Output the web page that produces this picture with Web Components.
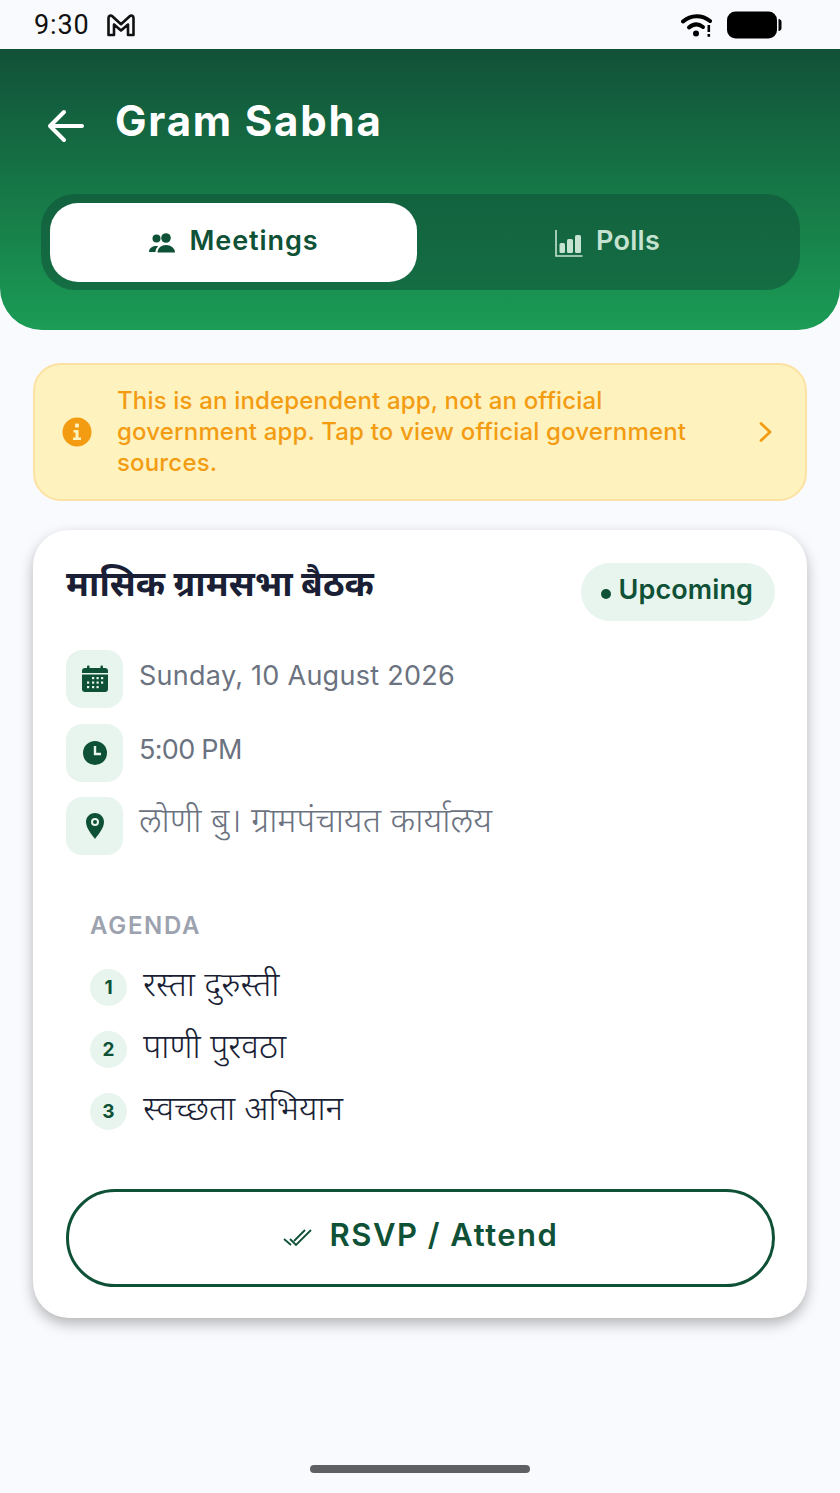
<!DOCTYPE html>
<html lang="mr">
<head>
<meta charset="utf-8">
<title>Gram Sabha</title>
<style>
    html, body { margin: 0; padding: 0; background: #f9fafd; }
    body { width: 840px; height: 1493px; overflow: hidden; font-family: "Inter", "Noto Sans", sans-serif; }
    gs-app { height: 1493px; }
</style>
</head>
<body>
<gs-app>
    <gs-status slot="status"></gs-status>
    <gs-header slot="header" title="Gram Sabha"></gs-header>
    <gs-banner slot="banner">This is an independent app, not an official<br>government app. Tap to view official government<br>sources.</gs-banner>
    <gs-card slot="card"></gs-card>
</gs-app>

<script>
const FONT = '"Inter", "Noto Sans", "Noto Sans Devanagari", sans-serif';
const DARK = '#0f5136';

class GsApp extends HTMLElement {
    constructor() {
        super();
        this.attachShadow({ mode: 'open' });
        this.shadowRoot.innerHTML = `
        <style>
            :host { display: flex; flex-direction: column; position: relative; font-family: ${FONT}; }
            .body { display: flex; flex-direction: column; padding: 33px 33px 0; gap: 29px; }
            .home { width: 220px; height: 8px; border-radius: 4px; background: #5f6063; margin: auto auto 20px; }
        </style>
        <slot name="status"></slot>
        <slot name="header"></slot>
        <div class="body">
            <slot name="banner"></slot>
            <slot name="card"></slot>
        </div>
        <div class="home"></div>`;
    }
}
customElements.define('gs-app', GsApp);

class GsStatus extends HTMLElement {
    constructor() {
        super();
        this.attachShadow({ mode: 'open' });
        this.shadowRoot.innerHTML = `
        <style>
            :host { display: flex; align-items: center; height: 49px; padding: 0 58px 0 34px; box-sizing: border-box; }
            .time { font: 400 27px "Roboto", sans-serif; color: #111; margin-right: 17px; letter-spacing: .9px; }
            .right { margin-left: auto; display: flex; align-items: center; gap: 14px; }
            svg { display: block; }
        </style>
        <span class="time">9:30</span>
        <svg width="28" height="24" viewBox="0 0 28 24"><path d="M1.500 22V5C1.500 2.800 3.800 1.800 5.300 3.200L14 11.200 22.700 3.200C24.200 1.800 26.500 2.800 26.500 5V22H21V11.500L14 17.500 7 11.500V22Z" fill="none" stroke="#111" stroke-width="2.600" stroke-linejoin="round"/></svg>
        <div class="right">
            <svg width="32" height="24" viewBox="0 0 32 24">
                <path d="M2 8.500C10 1.500 21 1.500 29 8" fill="none" stroke="#000" stroke-width="4" stroke-linecap="round"/>
                <path d="M8 14.500C12.500 10.500 17.500 10.500 22 14" fill="none" stroke="#000" stroke-width="4" stroke-linecap="round"/>
                <circle cx="15" cy="20.500" r="3" fill="#000"/>
                <rect x="26.500" y="12" width="2.600" height="7" fill="#000"/><rect x="26.500" y="21" width="2.600" height="2.800" fill="#000"/>
            </svg>
            <svg width="55" height="28" viewBox="0 0 55 28">
                <rect x="0" y="0.500" width="50" height="27" rx="8.500" fill="#000"/>
                <path d="M51.500 8c2 .300 3 1.200 3 3v6c0 1.800-1 2.700-3 3Z" fill="#000"/>
            </svg>
        </div>`;
    }
}
customElements.define('gs-status', GsStatus);

class GsHeader extends HTMLElement {
    constructor() {
        super();
        this.attachShadow({ mode: 'open' });
        this.shadowRoot.innerHTML = `
        <style>
            :host { display: block; height: 281px; box-sizing: border-box; padding: 0 40px 0 41px; border-radius: 0 0 42px 42px;
                background: linear-gradient(180deg, #115138 0%, #1b9c55 100%); color: #fff; }
            .top { display: flex; align-items: center; height: 145px; }
            .top svg { margin: 8px 30px 0 6px; display: block; }
            h1 { margin: 0; font: 700 42px ${FONT}; letter-spacing: 1.800px; position: relative; top: -1px; }
            .tabs { display: flex; gap: 7px; padding: 9px 9px 8px; height: 96px; box-sizing: border-box; border-radius: 34px; background: rgba(17, 81, 56, .55); }
        </style>
        <div class="top">
            <svg width="38" height="36" viewBox="0 0 38 36"><path d="M35 18H4M17 4 3 18l14 14" fill="none" stroke="#fff" stroke-width="4" stroke-linecap="round" stroke-linejoin="round"/></svg>
            <h1></h1>
        </div>
        <div class="tabs">
            <gs-tab active>
                <svg slot="icon" width="28" height="20" viewBox="0 0 28 20"><circle cx="7.500" cy="5.500" r="4" fill="${DARK}"/><circle cx="17" cy="5" r="4.800" fill="${DARK}"/><path d="M0 19c0-3.500 3-6 7-6 .8 0 1.500.1 2.200.3C7.500 14.800 6.500 16.800 6.500 19H0Z" fill="${DARK}"/><path d="M8.500 19.500c0-4.500 4-7.500 8.500-7.500s9 3 9 7.500Z" fill="${DARK}"/></svg>
                Meetings
            </gs-tab>
            <gs-tab>
                <svg slot="icon" width="28" height="28" viewBox="0 0 28 28" fill="#c6e2d0"><path d="M1 1v26h26.500" fill="none" stroke="#c6e2d0" stroke-width="1.600"/><rect x="4.500" y="14" width="5.500" height="10" rx="1.500"/><rect x="12" y="10" width="6" height="14" rx="1.500"/><rect x="20" y="6" width="6" height="18" rx="1.500"/></svg>
                Polls
            </gs-tab>
        </div>`;
        this.shadowRoot.querySelector('h1').textContent = this.getAttribute('title');
    }
}
customElements.define('gs-header', GsHeader);

class GsTab extends HTMLElement {
    constructor() {
        super();
        this.attachShadow({ mode: 'open' });
        this.shadowRoot.innerHTML = `
        <style>
            :host { flex: 1; display: flex; align-items: center; justify-content: center; gap: 13px; border-radius: 28px;
                font: 600 27px ${FONT}; color: #c6e2d0; letter-spacing: .3px; }
            :host([active]) { background: #fff; color: ${DARK}; letter-spacing: .9px; }
            ::slotted(svg) { display: block; }
            .t { position: relative; top: -2px; }
        </style>
        <slot name="icon"></slot><span class="t"><slot></slot></span>`;
    }
}
customElements.define('gs-tab', GsTab);

class GsBanner extends HTMLElement {
    constructor() {
        super();
        this.attachShadow({ mode: 'open' });
        this.shadowRoot.innerHTML = `
        <style>
            :host { display: flex; align-items: center; height: 138px; box-sizing: border-box; padding: 0 31px 0 27px; gap: 25px;
                background: #fef2bf; border: 2px solid #fbe2a2; border-radius: 28px; color: #f39c12; font: 500 24px/31px ${FONT}; letter-spacing: .17px; }
            .text { flex: 1; position: relative; top: -1px; }
            svg { display: block; flex: none; }
        </style>
        <svg width="30" height="30" viewBox="0 0 30 30"><circle cx="15" cy="15" r="14.500" fill="#f39c12"/><rect x="13" y="6.500" width="4" height="4" rx="1" fill="#fef2bf"/><path d="M11.500 13h5v7.500H19v2.500h-8v-2.500h2.500v-5h-2Z" fill="#fef2bf"/></svg>
        <div class="text"><slot></slot></div>
        <svg width="16" height="22" viewBox="0 0 16 22"><path d="M3 2.500 12 11l-9 8.500" fill="none" stroke="#f39c12" stroke-width="2.800" stroke-linecap="round" stroke-linejoin="round"/></svg>`;
    }
}
customElements.define('gs-banner', GsBanner);

class GsInfoRow extends HTMLElement {
    constructor() {
        super();
        this.attachShadow({ mode: 'open' });
        this.shadowRoot.innerHTML = `
        <style>
            :host { display: flex; align-items: center; gap: 16px; height: 58px; color: #6b7280; font: 400 27px ${FONT}; letter-spacing: .27px; }
            :host([short]) { letter-spacing: -.7px; }
            :host([deva]) { font-size: 34px; font-weight: 300; letter-spacing: 0; }
            .box { width: 57px; height: 58px; border-radius: 16px; background: #e8f5ee; display: flex; align-items: center; justify-content: center; }
            .label { position: relative; top: -4px; }
            :host([short]) .label { top: -3px; }
            :host([deva]) .label { top: -7px; }
        </style>
        <div class="box"><slot name="icon"></slot></div>
        <div class="label"><slot></slot></div>`;
    }
}
customElements.define('gs-info-row', GsInfoRow);

class GsAgendaItem extends HTMLElement {
    constructor() {
        super();
        this.attachShadow({ mode: 'open' });
        this.shadowRoot.innerHTML = `
        <style>
            :host { display: flex; align-items: center; gap: 16px; height: 37px; color: #1a1f36; font: 300 33.500px ${FONT}; }
            .num { width: 37px; height: 37px; border-radius: 50%; background: #e8f5ee; color: ${DARK}; font: 700 19px ${FONT};
                display: flex; align-items: center; justify-content: center; flex: none; }
            .label { position: relative; top: -5px; }
        </style>
        <div class="num"></div><div class="label"><slot></slot></div>`;
        this.shadowRoot.querySelector('.num').textContent = this.getAttribute('n');
    }
}
customElements.define('gs-agenda-item', GsAgendaItem);

class GsCard extends HTMLElement {
    constructor() {
        super();
        this.attachShadow({ mode: 'open' });
        this.shadowRoot.innerHTML = `
        <style>
            :host { display: block; height: 788px; box-sizing: border-box; padding: 33px 32px 33px 33px; background: #fff; border-radius: 36px;
                box-shadow: 0 6px 14px rgba(0, 0, 0, .28); font-family: ${FONT}; }
            .head { display: flex; justify-content: space-between; align-items: flex-start; height: 58px; }
            h2 { margin: 0; font: 700 35.300px/42px ${FONT}; color: #1a1f36; }
            .badge { display: flex; align-items: center; gap: 8px; height: 58px; padding: 0 22px 0 20px; border-radius: 29px; background: #e8f5ee;
                color: ${DARK}; font: 600 27px ${FONT}; }
            .badge span:last-child { position: relative; top: -3px; letter-spacing: .1px; }
            .dot { width: 10px; height: 10px; border-radius: 50%; background: ${DARK}; margin-top: 3px; }
            .rows { display: flex; flex-direction: column; gap: 15.500px; margin-top: 29px; }
            .agenda { padding-left: 24px; margin-top: 57px; }
            .agenda h3 { margin: 0 0 29px; font: 600 24px/28px ${FONT}; letter-spacing: 1.700px; color: #9ca3af; }
            .items { display: flex; flex-direction: column; gap: 25px; }
            button { display: flex; align-items: center; justify-content: center; gap: 17px; width: 100%; height: 98px; margin-top: 59px; padding: 0;
                background: #fff; border: 3px solid ${DARK}; border-radius: 49px; color: ${DARK}; font: 600 31px ${FONT}; letter-spacing: 1.500px; }
            button span { position: relative; top: -4px; }
            svg { display: block; }
        </style>
        <div class="head">
            <h2>मासिक ग्रामसभा बैठक</h2>
            <div class="badge"><span class="dot"></span><span>Upcoming</span></div>
        </div>
        <div class="rows">
            <gs-info-row>
                <svg slot="icon" width="28" height="28" viewBox="0 0 28 28"><rect x="1" y="3" width="26" height="24" rx="3" fill="${DARK}"/><rect x="6" y="0.500" width="2.500" height="5" rx="1" fill="${DARK}"/><rect x="19.500" y="0.500" width="2.500" height="5" rx="1" fill="${DARK}"/><rect x="1" y="8" width="26" height="1.500" fill="#e8f5ee"/><g fill="#e8f5ee"><rect x="11" y="12" width="2.200" height="2.200"/><rect x="15.500" y="12" width="2.200" height="2.200"/><rect x="20" y="12" width="2.200" height="2.200"/><rect x="6" y="16.500" width="2.200" height="2.200"/><rect x="11" y="16.500" width="2.200" height="2.200"/><rect x="15.500" y="16.500" width="2.200" height="2.200"/><rect x="20" y="16.500" width="2.200" height="2.200"/><rect x="6" y="21" width="2.200" height="2.200"/><rect x="11" y="21" width="2.200" height="2.200"/><rect x="15.500" y="21" width="2.200" height="2.200"/></g></svg>
                Sunday, 10 August 2026
            </gs-info-row>
            <gs-info-row short>
                <svg slot="icon" width="26" height="26" viewBox="0 0 26 26"><circle cx="13" cy="13" r="12" fill="${DARK}"/><path d="M13 6v8h6" fill="none" stroke="#e8f5ee" stroke-width="2.400"/></svg>
                5:00 PM
            </gs-info-row>
            <gs-info-row deva>
                <svg slot="icon" width="20" height="28" viewBox="0 0 20 28"><path fill-rule="evenodd" d="M10 1C4.800 1 1 5 1 10c0 6 6 13 9 17 3-4 9-11 9-17 0-5-3.800-9-9-9Zm0 5a4 4 0 1 1 0 8 4 4 0 0 1 0-8Z" fill="${DARK}"/><circle cx="10" cy="10" r="2" fill="${DARK}"/></svg>
                लोणी बु। ग्रामपंचायत कार्यालय
            </gs-info-row>
        </div>
        <div class="agenda">
            <h3>AGENDA</h3>
            <div class="items">
                <gs-agenda-item n="1">रस्ता दुरुस्ती</gs-agenda-item>
                <gs-agenda-item n="2">पाणी पुरवठा</gs-agenda-item>
                <gs-agenda-item n="3">स्वच्छता अभियान</gs-agenda-item>
            </div>
        </div>
        <button>
            <svg width="30" height="18" viewBox="0 0 30 18"><path d="M1 10l7 6M7 10l6 6L28 1M11 12 22 1" fill="none" stroke="${DARK}" stroke-width="1.800"/></svg>
            <span>RSVP / Attend</span>
        </button>`;
    }
}
customElements.define('gs-card', GsCard);
</script>
</body>
</html>
